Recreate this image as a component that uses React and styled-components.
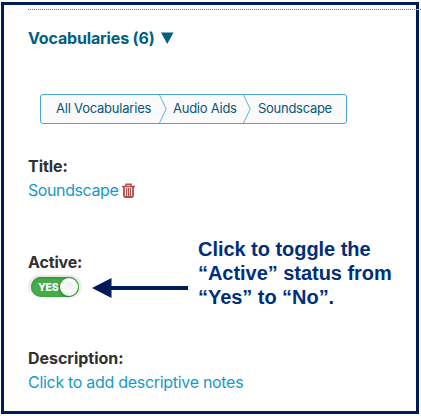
import React from "react";
import styled, { createGlobalStyle } from "styled-components";

const GlobalStyle = createGlobalStyle`
  * { box-sizing: border-box; }
  body { margin: 0; background: #fff; }
`;

const Page = styled.main`
  width: 421px;
  height: 416px;
  padding: 2px 2px 2px 1px;
  overflow: hidden;
  font-family: Inter, "Liberation Sans", sans-serif;
`;

const Frame = styled.section`
  display: flex;
  flex-direction: column;
  align-items: flex-start;
  width: 418px;
  height: 412px;
  border: 3px solid #001c58;
  padding: 4px 0 0 24px;
`;

const Divider = styled.div`
  width: 393px;
  height: 1px;
  background: repeating-linear-gradient(90deg, #b8651b 0 1px, #fff 1px 2px);
`;

const SectionHeading = styled.h2`
  display: flex;
  align-items: center;
  gap: 6px;
  height: 24px;
  margin: 16px 0 0;
  color: #026080;
  font-size: 16px;
  font-weight: 700;
  line-height: 24px;
  letter-spacing: -0.15px;
  white-space: nowrap;
`;

const Breadcrumb = styled.nav`
  display: flex;
  width: 307px;
  height: 30px;
  margin: 44px 0 0 12px;
  border: 1px solid #4aa5d2;
  border-radius: 3px;
  background: #fafafa;
`;

const Crumb = styled.span`
  width: ${(p) => p.$width}px;
  padding-left: ${(p) => p.$inset}px;
  color: #08567a;
  font-size: 13px;
  line-height: 27px;
  letter-spacing: ${(p) => p.$tracking}px;
  white-space: nowrap;
`;

const Chevron = styled.svg`
  flex: none;
  display: block;
  width: 8px;
  height: 28px;
`;

const Field = styled.div`
  display: flex;
  flex-direction: column;
  align-items: flex-start;
  margin-top: ${(p) => p.$gap}px;
`;

const Label = styled.div`
  height: 24px;
  color: #303030;
  font-size: 16px;
  font-weight: 700;
  line-height: 24px;
  letter-spacing: ${(p) => p.$tracking}px;
  white-space: nowrap;
`;

const Value = styled.div`
  display: flex;
  align-items: center;
  gap: 4px;
  height: 24px;
`;

const ActionText = styled.a`
  color: #1599c9;
  font-size: 16px;
  line-height: 24px;
  letter-spacing: ${(p) => p.$tracking}px;
  white-space: nowrap;
`;

const StatusRow = styled.div`
  display: flex;
  height: 74px;
  margin-top: 35px;
`;

const StatusField = styled.div`
  width: 64px;
  padding-top: 13px;
`;

const Toggle = styled.div`
  display: flex;
  align-items: center;
  width: 54px;
  height: 24px;
  margin-top: 1px;
  padding: 2px 3px;
  border-radius: 12px;
  background: linear-gradient(#e5e5e5, #f9f9f9);
`;

const ToggleTrack = styled.div`
  display: flex;
  align-items: center;
  justify-content: space-between;
  width: 49px;
  height: 20px;
  padding: 0 1px 0 7px;
  border-radius: 10px;
  background: #46ab48;
  box-shadow: inset 0 1px 2px #30913a, inset 0 0 2px #369c3d;
  color: #fff;
  font-size: 10.5px;
  font-weight: 800;
  letter-spacing: -0.3px;
`;

const ToggleKnob = styled.span`
  display: flex;
  align-items: center;
  justify-content: center;
  width: 18px;
  height: 18px;
  border-radius: 50%;
  background: linear-gradient(#fff, #f2f2f2);
  box-shadow: -1px 1px 2px rgba(0, 0, 0, 0.3);

  &::after {
    content: "";
    width: 10px;
    height: 10px;
    border-radius: 50%;
    background: linear-gradient(#eee, #fff);
  }
`;

const Arrow = styled.svg`
  display: block;
  width: 96px;
  height: 20px;
  margin: 41px 10px 0 0;
`;

const Annotation = styled.div`
  color: #002f7c;
  font-family: "Liberation Sans", sans-serif;
  font-size: 20px;
  font-weight: 700;
  line-height: 24px;
  letter-spacing: -0.04px;
  white-space: nowrap;
`;

function TrashIcon() {
  return (
    <svg width="13" height="15" viewBox="0 0 13 15" fill="none" stroke="#b34a46">
      <path d="M0 3.4h13M4 3V1.2h5V3" strokeWidth="1.5" />
      <path d="M2 4v8.8q0 1.2 1.2 1.2h6.6q1.2 0 1.2-1.2V4" strokeWidth="1.8" />
      <path d="M4.6 5v8M6.5 5v8M8.4 5v8" strokeWidth="1.1" />
    </svg>
  );
}

function CrumbDivider() {
  return (
    <Chevron viewBox="0 0 8 28" fill="none">
      <path d="M.5 0 7.2 14 .5 28" stroke="#67b2d8" strokeWidth="1" />
    </Chevron>
  );
}

export default function App() {
  return (
    <>
      <GlobalStyle />
      <Page>
        <Frame>
          <Divider />
          <SectionHeading>
            <span>Vocabularies (6)</span>
            <svg width="13" height="12" viewBox="0 0 13 12">
              <path d="M0 .5h12.5L6.25 12z" fill="#026080" />
            </svg>
          </SectionHeading>
          <Breadcrumb>
            <Crumb $width={118} $inset={15} $tracking={-0.22}>All Vocabularies</Crumb>
            <CrumbDivider />
            <Crumb $width={76} $inset={6} $tracking={-0.25}>Audio Aids</Crumb>
            <CrumbDivider />
            <Crumb $width={95} $inset={7} $tracking={-0.28}>Soundscape</Crumb>
          </Breadcrumb>
          <Field $gap={30}>
            <Label $tracking={-0.05}>Title:</Label>
            <Value>
              <ActionText $tracking={-0.4}>Soundscape</ActionText>
              <TrashIcon />
            </Value>
          </Field>
          <StatusRow>
            <StatusField>
              <Label $tracking={-0.15}>Active:</Label>
              <Toggle>
                <ToggleTrack>YES<ToggleKnob /></ToggleTrack>
              </Toggle>
            </StatusField>
            <Arrow viewBox="0 0 96 20">
              <path d="M0 10 19.5 0v8H96v4H19.5v8z" fill="#001c58" />
            </Arrow>
            <Annotation>
              <div>Click to toggle the</div>
              <div>“Active” status from</div>
              <div>“Yes” to “No”.</div>
            </Annotation>
          </StatusRow>
          <Field $gap={35}>
            <Label $tracking={-0.03}>Description:</Label>
            <ActionText $tracking={-0.3}>Click to add descriptive notes</ActionText>
          </Field>
        </Frame>
      </Page>
    </>
  );
}
